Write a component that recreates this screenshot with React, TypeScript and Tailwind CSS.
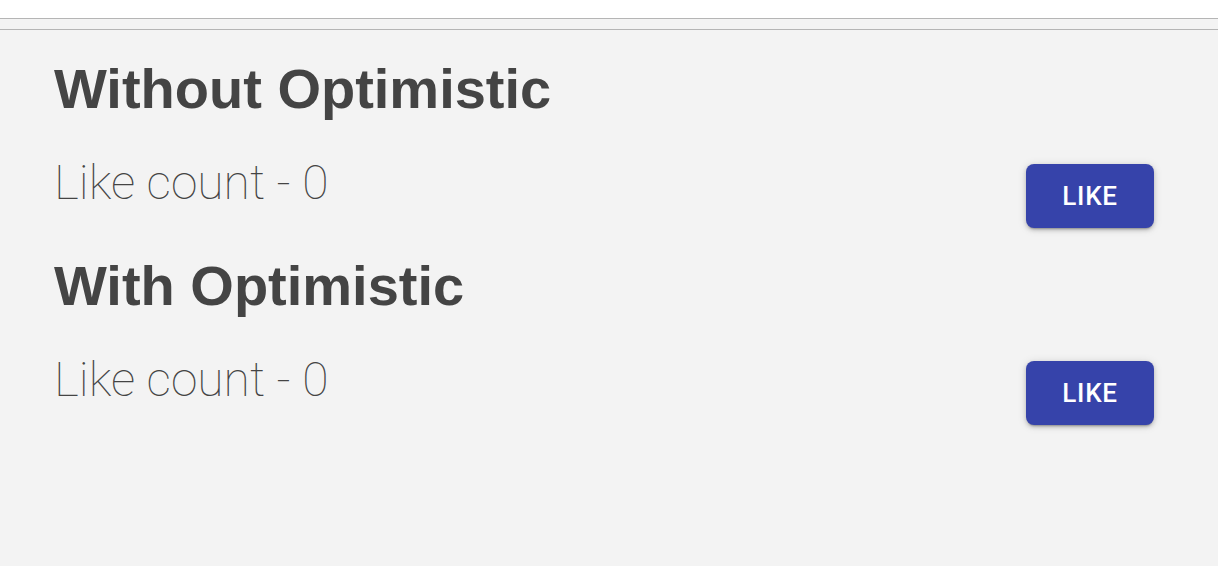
import React from 'react';

function LikeSection({ title, count }: { title: string; count: number }) {
  return (
    <section>
      <h2 className="text-[56px] leading-[67px] font-bold text-[#444444]">{title}</h2>
      <div className="mt-[32px] flex items-start justify-between">
        <p className="text-[48px] leading-[57px] font-thin text-[#444444] font-['Roboto',sans-serif]">
          Like count - {count}
        </p>
        <button
          type="button"
          className="mt-[10px] h-[64px] w-[128px] rounded-[8px] bg-[#3643aa] text-white text-[26px] font-medium tracking-[0.03em] font-['Roboto',sans-serif] shadow-[0_3px_2px_-2px_rgba(0,0,0,0.25),0_2px_4px_0_rgba(0,0,0,0.18),0_1px_10px_0_rgba(0,0,0,0.12)]"
        >
          LIKE
        </button>
      </div>
    </section>
  );
}

export default function App() {
  return (
    <div className="h-[566px] w-full overflow-hidden bg-white font-['Liberation_Sans',Arial,sans-serif]">
      <div className="h-[18px] bg-white" />
      <div className="h-[12px] border-y border-[#b5b5b5] bg-[#f3f3f3]" />
      <main className="h-[536px] bg-[#f3f3f3] pl-[54px] pr-[64px] pt-[25px]">
        <LikeSection title="Without Optimistic" count={0} />
        <div className="mt-[24px]">
          <LikeSection title="With Optimistic" count={0} />
        </div>
      </main>
    </div>
  );
}
